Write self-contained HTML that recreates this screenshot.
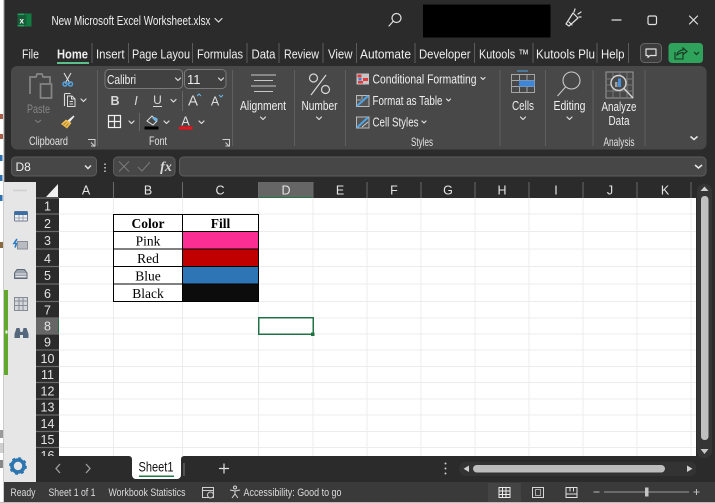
<!DOCTYPE html>
<html><head><meta charset="utf-8"><style>
html,body{margin:0;padding:0;background:#fff;width:715px;height:503px;overflow:hidden}
svg{display:block}
text{font-family:"Liberation Sans",sans-serif}
.w{fill:#efefef;font-size:13px}
.g{fill:#e2e2e2;font-size:12px}
.s{fill:#dadada;font-size:11px}
.h{fill:#e4e4e4;font-size:12.500px;text-anchor:middle}
.c{fill:#000;font-family:"Liberation Serif",serif;font-size:13.500px;text-anchor:middle}
.v{fill:none;stroke:#e0e0e0;stroke-width:1.200;stroke-linecap:round;stroke-linejoin:round}
</style></head><body>
<svg width="715" height="503" viewBox="0 0 715 503" xmlns="http://www.w3.org/2000/svg">
<rect width="715" height="503" fill="#fff"/>
<!-- background window peeking at the far left -->
<rect x="0" y="114" width="3" height="5" fill="#a8604a"/>
<rect x="0" y="134" width="3" height="5" fill="#a8604a"/>
<rect x="0" y="155" width="2.500" height="6" fill="#2f6fb5"/>
<rect x="0" y="175" width="2.500" height="6" fill="#2f6fb5"/>
<rect x="0" y="195" width="2.500" height="6" fill="#2f6fb5"/>
<rect x="0" y="242" width="3" height="6" fill="#8a6a40"/>
<rect x="0" y="430" width="3" height="8" fill="#9a9a9a"/>
<rect x="0" y="443" width="3.500" height="10" fill="#d0d0d0"/>
<rect x="0" y="460" width="3" height="8" fill="#888"/>
<rect x="4" y="0" width="711" height="502" fill="#2b2b2b"/>
<rect x="3.500" y="0" width="1" height="503" fill="#999"/>
<rect x="0" y="502" width="715" height="1" fill="#bbb"/>

<!-- title bar -->
<rect x="17.500" y="13.500" width="14" height="13" rx="1" fill="#21a366"/>
<rect x="24" y="13.500" width="7.500" height="13" fill="#107c41"/>
<rect x="17.500" y="15" width="9" height="10" fill="#185c37"/>
<text x="19.500" y="23.500" style="font-size:8px;font-weight:bold" fill="#fff">x</text>
<text x="51.500" y="25" class="w" style="font-size:12.500px" textLength="159" lengthAdjust="spacingAndGlyphs">New Microsoft Excel Worksheet.xlsx</text>
<path d="M215 18.500l3.500 3.500 3.500-3.500" class="v"/>
<circle cx="396.500" cy="18" r="4.500" class="v"/><path d="M393 21.500l-4 4.500" class="v"/>
<rect x="423" y="4.500" width="127.500" height="33" fill="#000"/>
<path d="M566 24l7-11 5 5-9 8zM569 22l3 3M574 12l1-3M578 14l3-2M579 17l2 0" class="v"/>
<path d="M612 20h9" class="v"/>
<rect x="648" y="16" width="8.500" height="8.500" rx="1.500" class="v"/>
<path d="M689.500 16l8 8M697.500 16l-8 8" class="v"/>

<!-- tabs -->
<text x="22" y="58.500" class="w" textLength="17" lengthAdjust="spacingAndGlyphs">File</text>
<text x="57" y="58.500" class="w" style="font-weight:bold" textLength="31" lengthAdjust="spacingAndGlyphs">Home</text>
<rect x="57" y="62" width="32" height="2" fill="#5fbf8a"/>
<text x="96" y="58.500" class="w" textLength="28.500" lengthAdjust="spacingAndGlyphs">Insert</text>
<text x="132" y="58.500" class="w" textLength="58" lengthAdjust="spacingAndGlyphs">Page Layou</text>
<text x="197" y="58.500" class="w" textLength="46" lengthAdjust="spacingAndGlyphs">Formulas</text>
<text x="251.500" y="58.500" class="w" textLength="24" lengthAdjust="spacingAndGlyphs">Data</text>
<text x="284" y="58.500" class="w" textLength="35" lengthAdjust="spacingAndGlyphs">Review</text>
<text x="328" y="58.500" class="w" textLength="24.500" lengthAdjust="spacingAndGlyphs">View</text>
<text x="360" y="58.500" class="w" textLength="51" lengthAdjust="spacingAndGlyphs">Automate</text>
<text x="419" y="58.500" class="w" textLength="51.500" lengthAdjust="spacingAndGlyphs">Developer</text>
<text x="479" y="58.500" class="w" textLength="50" lengthAdjust="spacingAndGlyphs">Kutools ™</text>
<text x="536" y="58.500" class="w" textLength="59" lengthAdjust="spacingAndGlyphs">Kutools Plu</text>
<text x="601" y="58.500" class="w" textLength="23.500" lengthAdjust="spacingAndGlyphs">Help</text>
<path d="M92 43v20M128.500 43v20M192.500 43v20M247 43v20M279 43v20M323 43v20M356.500 43v20M415 43v20M474.500 43v20M533 43v20M597 43v20M628.500 43v20" stroke="#5c5c5c" fill="none"/>
<rect x="640.500" y="43.500" width="21" height="19" rx="4" fill="#3d3d3d" stroke="#666"/>
<path d="M646 49h10v6.500h-6l-2 2v-2h-2z" class="v"/>
<rect x="668.500" y="43" width="34.500" height="20" rx="3.500" fill="#2fa35c"/>
<path d="M675 52v7h8v-4M677 55c0-3 3-5 6-5v-2l4 3.500-4 3v-2c-2 0-4 1-6 2.500z" fill="none" stroke="#16331f" stroke-width="1.100"/>
<path d="M694 52l2.500 2.500 2.500-2.500" fill="none" stroke="#16331f" stroke-width="1.200"/>

<!-- ribbon -->
<rect x="11" y="66" width="695.500" height="83.500" rx="6" fill="#484848"/>
<g stroke="#5f5f5f" fill="none">
<path d="M97.500 70v76M232.500 70v76M294.500 70v76M345.500 70v76M500 70v76M545.500 70v76M593 70v76M645 70v76"/>
</g>
<!-- clipboard -->
<path d="M30 94V77h6l1-3h5l1 3h7v6" fill="none" stroke="#868686" stroke-width="1.700"/>
<rect x="40.500" y="84" width="11" height="14" fill="none" stroke="#868686" stroke-width="1.700"/>
<text x="38.500" y="113" text-anchor="middle" style="font-size:12px" fill="#868686" textLength="23" lengthAdjust="spacingAndGlyphs">Paste</text>
<path d="M35 120l3 2.500 3-2.500" fill="none" stroke="#808080"/>
<path d="M64 73l6 10.500M71 73l-6 10.500" stroke="#e4e4e4" fill="none"/>
<circle cx="65" cy="84" r="2" fill="none" stroke="#4fa3e0" stroke-width="1.500"/><circle cx="70.500" cy="84" r="2" fill="none" stroke="#4fa3e0" stroke-width="1.500"/>
<path d="M64.500 106V94.500a1 1 0 0 1 1-1h5" fill="none" stroke="#dcdcdc" stroke-width="1.100"/>
<path d="M67.500 106.500h7.500v-7.500l-3-3h-4.500zM71.500 96v3h3.500M69.500 101.500h3.500M69.500 104h3.500" fill="none" stroke="#dcdcdc" stroke-width="1"/>
<path d="M81 99l2.500 2.500 2.500-2.500" class="v"/>
<path d="M73.500 115.500l-6 5 2 2 5-6z" fill="#ededed"/>
<path d="M66 119.500l-5 4.500 6 4.500 4.500-5.500z" fill="#f0bd4e"/>
<path d="M63.500 125l3-3M66 126.500l2.500-3" stroke="#9a7a28" stroke-width=".8"/>
<text x="48.500" y="145" text-anchor="middle" class="g" textLength="39" lengthAdjust="spacingAndGlyphs">Clipboard</text>
<path d="M88 139.500h7v7M95 146.500l-4-4M91 146h4v-4" fill="none" stroke="#cfcfcf"/>
<!-- font -->
<rect x="105" y="69.500" width="77.500" height="19" rx="4" fill="#414141" stroke="#7a7a7a"/>
<text x="107" y="84" class="w" textLength="29" lengthAdjust="spacingAndGlyphs">Calibri</text>
<path d="M175.500 78l2.500 2.500 2.500-2.500" class="v"/>
<rect x="184.500" y="69.500" width="41.500" height="19" rx="4" fill="#414141" stroke="#7a7a7a"/>
<text x="187" y="84" class="w">11</text>
<path d="M218.500 78l2.500 2.500 2.500-2.500" class="v"/>
<text x="115" y="105" text-anchor="middle" style="font-size:12.500px;font-weight:bold" fill="#d8d8d8">B</text>
<text x="136" y="105" text-anchor="middle" style="font-size:12.500px;font-style:italic" fill="#d8d8d8">I</text>
<text x="157.500" y="104" text-anchor="middle" style="font-size:12px" fill="#d8d8d8">U</text>
<path d="M153 106.500h9" stroke="#d8d8d8"/>
<path d="M171 99.500l2.500 2.500 2.500-2.500" class="v"/>
<path d="M182.500 91v20" stroke="#666"/>
<text x="193" y="105.500" text-anchor="middle" style="font-size:15px" fill="#dcdcdc">A</text>
<path d="M197 96l2-2 2 2" fill="none" stroke="#6cb6e8"/>
<text x="215" y="105.500" text-anchor="middle" style="font-size:12.500px" fill="#dcdcdc">A</text>
<path d="M219 95l2 2 2-2" fill="none" stroke="#6cb6e8"/>
<rect x="108.500" y="115.500" width="12" height="12" fill="none" stroke="#f0f0f0" stroke-width="1.200"/>
<path d="M114.500 115.500v12M108.500 121.500h12" stroke="#f0f0f0" stroke-width="1.200"/>
<path d="M129 121l2.500 2.500 2.500-2.500" class="v"/>
<path d="M139.500 113v18" stroke="#666"/>
<path d="M147 121l5-5 5 5-4 4z" fill="none" stroke="#e0e0e0"/>
<path d="M152 118l4 4 2-3-3-2z" fill="#6cb6e8"/>
<rect x="144.500" y="126.500" width="14" height="3" fill="#000"/>
<path d="M164 121l2.500 2.500 2.500-2.500" class="v"/>
<text x="185.500" y="125.500" text-anchor="middle" style="font-size:12.500px" fill="#e0e0e0">A</text>
<rect x="179" y="126.500" width="13.500" height="3" fill="#f0101c"/>
<path d="M199 121l2.500 2.500 2.500-2.500" class="v"/>
<text x="158" y="145" text-anchor="middle" class="g" textLength="18" lengthAdjust="spacingAndGlyphs">Font</text>
<path d="M222.500 139.500h7v7M229.500 146.500l-4-4M225.500 146h4v-4" fill="none" stroke="#cfcfcf"/>
<!-- align -->
<path d="M251 75h25M254 80.500h19M251 86h25M254 91.500h19" stroke="#c8c8c8" stroke-width="1.100" fill="none"/>
<text x="263" y="110" text-anchor="middle" class="w" style="font-size:12.500px" textLength="46" lengthAdjust="spacingAndGlyphs">Alignment</text>
<path d="M260.500 117l2.500 2.500 2.500-2.500" class="v"/>
<!-- number -->
<path d="M326 75l-15 20" stroke="#d8d8d8" stroke-width="1.200" fill="none"/>
<circle cx="313.500" cy="78" r="4" fill="none" stroke="#d8d8d8" stroke-width="1.200"/><circle cx="325.500" cy="89.500" r="4" fill="none" stroke="#d8d8d8" stroke-width="1.200"/>
<text x="319.500" y="110" text-anchor="middle" class="w" style="font-size:12.500px" textLength="36" lengthAdjust="spacingAndGlyphs">Number</text>
<path d="M316.500 117l2.500 2.500 2.500-2.500" class="v"/>
<!-- styles -->
<rect x="356.500" y="73.500" width="12.500" height="11" fill="#c5c5c5"/>
<rect x="357.500" y="74.500" width="4" height="3" fill="#e23b3b"/><rect x="363" y="78" width="5" height="3" fill="#e23b3b"/><rect x="358" y="81" width="5" height="2.500" fill="#e23b3b"/><rect x="358.500" y="78" width="3" height="2.500" fill="#3d7fd6"/>
<text x="372.500" y="83.500" class="w" style="font-size:12.500px" textLength="104" lengthAdjust="spacingAndGlyphs">Conditional Formatting</text>
<path d="M481 77.500l2 2 2-2" class="v"/>
<rect x="356.500" y="95.500" width="12.500" height="11" fill="#555" stroke="#bbb"/><path d="M357 106l11-10" stroke="#4ea6e8" stroke-width="2"/><path d="M357 100h4M362 95.500v4" stroke="#aaa"/>
<text x="372.500" y="105" class="w" style="font-size:12.500px" textLength="70" lengthAdjust="spacingAndGlyphs">Format as Table</text>
<path d="M446.500 99l2 2 2-2" class="v"/>
<rect x="356.500" y="117" width="12.500" height="11" fill="#555" stroke="#bbb"/><path d="M357 127.500l11-10" stroke="#4ea6e8" stroke-width="2"/><path d="M362 127l6-5" stroke="#ccc"/>
<text x="372.500" y="126.500" class="w" style="font-size:12.500px" textLength="46" lengthAdjust="spacingAndGlyphs">Cell Styles</text>
<path d="M422 121l2 2 2-2" class="v"/>
<text x="422" y="146" text-anchor="middle" class="g" textLength="22" lengthAdjust="spacingAndGlyphs">Styles</text>
<!-- cells -->
<path d="M517 71h11" stroke="#4ea6e8" fill="none"/>
<rect x="511.500" y="74.500" width="23" height="18" fill="none" stroke="#a5a5a5"/>
<path d="M511.500 80.500h23M511.500 86.500h23M519.500 74.500v18M527 74.500v18" stroke="#a5a5a5" fill="none"/>
<rect x="519" y="80.500" width="15.500" height="6" fill="#3f87d6"/>
<text x="523" y="110" text-anchor="middle" class="w" style="font-size:12.500px" textLength="22" lengthAdjust="spacingAndGlyphs">Cells</text>
<path d="M520.500 117l2.500 2.500 2.500-2.500" class="v"/>
<!-- editing -->
<circle cx="571.500" cy="80.500" r="8.500" fill="none" stroke="#c8c8c8" stroke-width="1.100"/>
<path d="M565.500 87l-8 9" stroke="#c8c8c8" stroke-width="1.100"/>
<text x="569.500" y="110" text-anchor="middle" class="w" style="font-size:12.500px" textLength="32" lengthAdjust="spacingAndGlyphs">Editing</text>
<path d="M567 117l2.500 2.500 2.500-2.500" class="v"/>
<!-- analyze -->
<rect x="606" y="72" width="27" height="26" fill="none" stroke="#9a9a9a"/>
<path d="M606 79h27M606 85h27M606 91h27M613 72v26M620 72v26M627 72v26" stroke="#777" fill="none"/>
<circle cx="618.500" cy="83" r="7.500" fill="#4a4a4a" stroke="#d5d5d5" stroke-width="1.400"/>
<rect x="615" y="82" width="2.500" height="5" fill="#a0a0a0"/><rect x="618" y="78.500" width="3" height="8.500" fill="#4a90d9"/>
<path d="M624 88.500l9 9.500" stroke="#d5d5d5" stroke-width="1.400"/>
<text x="619" y="111" text-anchor="middle" class="w" style="font-size:12.500px" textLength="35" lengthAdjust="spacingAndGlyphs">Analyze</text>
<text x="619" y="125" text-anchor="middle" class="w" style="font-size:12.500px" textLength="21" lengthAdjust="spacingAndGlyphs">Data</text>
<text x="619" y="146" text-anchor="middle" class="g" textLength="31" lengthAdjust="spacingAndGlyphs">Analysis</text>
<path d="M690.500 136.500l3.500 3 3.500-3" fill="none" stroke="#e8e8e8" stroke-width="1.500"/>

<!-- formula row -->
<rect x="11.500" y="157" width="85" height="19" rx="4" fill="#474747" stroke="#5c5c5c"/>
<text x="15.500" y="171" class="w" style="font-size:12px">D8</text>
<path d="M85 165.500l3 3 3-3" fill="none" stroke="#e8e8e8" stroke-width="1.400"/>
<path d="M105 163.500v1.500M105 167v1.500M105 170.500v1.500" stroke="#ccc" stroke-width="1.500"/>
<rect x="113.500" y="157" width="61.500" height="19" rx="4" fill="#474747" stroke="#5c5c5c"/>
<path d="M119 161.500l10 10M129 161.500l-10 10" stroke="#7a7a7a" fill="none"/>
<path d="M138 167l4 4 8-9" stroke="#7a7a7a" fill="none"/>
<text x="166" y="171" text-anchor="middle" style="font-family:'Liberation Serif',serif;font-style:italic;font-size:14px;font-weight:bold" fill="#d8d8d8">fx</text>
<rect x="179.500" y="157" width="526.500" height="19" rx="4" fill="#474747" stroke="#5c5c5c"/>
<path d="M695 165l3.500 3 3.500-3" fill="none" stroke="#e8e8e8" stroke-width="1.500"/>

<!-- sheet -->
<rect x="59" y="198" width="637" height="258" fill="#fff"/>
<g stroke="#ececec" fill="none">
<path d="M59 214h637M59 231.500h637M59 249h637M59 266.500h637M59 284h637M59 301.500h637M59 318h637M59 334h637M59 350h637M59 366.500h637M59 382.500h637M59 399h637M59 415h637M59 431.500h637M59 447.500h637"/>
<path d="M113.500 198v258M182.500 198v258M258.500 198v258M313 198v258M367 198v258M421 198v258M475 198v258M529 198v258M583 198v258M637 198v258M691 198v258"/>
</g>
<!-- col headers -->
<rect x="36" y="182" width="660" height="16" fill="#2b2b2b"/>
<rect x="258.500" y="182" width="54.500" height="16" fill="#666"/>
<rect x="258.500" y="197" width="54.500" height="1" fill="#217346"/>
<path d="M113.500 182v16M182.500 182v16M258.500 182v16M313 182v16M367 182v16M421 182v16M475 182v16M529 182v16M583 182v16M637 182v16M691 182v16" stroke="#6a6a6a" fill="none"/>
<text x="86" y="194.500" class="h">A</text><text x="148" y="194.500" class="h">B</text><text x="220" y="194.500" class="h">C</text><text x="286" y="194.500" class="h">D</text><text x="340" y="194.500" class="h">E</text><text x="394" y="194.500" class="h">F</text><text x="448" y="194.500" class="h">G</text><text x="502" y="194.500" class="h">H</text><text x="556" y="194.500" class="h">I</text><text x="610" y="194.500" class="h">J</text><text x="665" y="194.500" class="h">K</text>
<!-- row headers -->
<rect x="36" y="182" width="23" height="274" fill="#2b2b2b"/>
<path d="M58 184v13H46z" fill="#f0f0f0"/>
<rect x="36" y="318" width="23" height="16" fill="#666"/>
<rect x="58" y="318" width="1" height="16" fill="#217346"/>
<path d="M36 198h23M36 214h23M36 231.500h23M36 249h23M36 266.500h23M36 284h23M36 301.500h23M36 318h23M36 334h23M36 350h23M36 366.500h23M36 382.500h23M36 399h23M36 415h23M36 431.500h23M36 447.500h23" stroke="#6a6a6a" stroke-width="1.300" fill="none"/>
<text x="47.500" y="210.500" class="h">1</text><text x="47.500" y="228" class="h">2</text><text x="47.500" y="245" class="h">3</text><text x="47.500" y="263" class="h">4</text><text x="47.500" y="280" class="h">5</text><text x="47.500" y="298" class="h">6</text><text x="47.500" y="314.500" class="h">7</text><text x="47.500" y="330.500" class="h">8</text><text x="47.500" y="346.500" class="h">9</text><text x="47.500" y="363" class="h">10</text><text x="47.500" y="379" class="h">11</text><text x="47.500" y="395.500" class="h">12</text><text x="47.500" y="411.500" class="h">13</text><text x="47.500" y="428" class="h">14</text><text x="47.500" y="444" class="h">15</text><text x="47.500" y="460" class="h">16</text>
<!-- table -->
<rect x="182.500" y="231.500" width="76" height="17.500" fill="#fb2f93"/>
<rect x="182.500" y="249" width="76" height="17.500" fill="#c00000"/>
<rect x="182.500" y="266.500" width="76" height="17.500" fill="#2e75b6"/>
<rect x="182.500" y="284" width="76" height="17.500" fill="#0c0c0c"/>
<g stroke="#000" fill="none"><rect x="113.500" y="214.500" width="145" height="87"/><path d="M182.500 214.500v87M113.500 231.500h145M113.500 249h145M113.500 266.500h145M113.500 284h145"/></g>
<text x="148" y="228" class="c" style="font-weight:bold">Color</text>
<text x="220.500" y="228" class="c" style="font-weight:bold">Fill</text>
<text x="148" y="245.500" class="c">Pink</text>
<text x="148" y="263" class="c">Red</text>
<text x="148" y="280.500" class="c">Blue</text>
<text x="148" y="298" class="c">Black</text>
<!-- selection -->
<rect x="258.750" y="317.750" width="54.500" height="16.500" fill="none" stroke="#217346" stroke-width="1.500"/>
<rect x="311" y="332.500" width="3.500" height="3.500" fill="#217346"/>

<!-- task pane -->
<rect x="4" y="182" width="32" height="300" fill="#e6e6e6"/>
<rect x="4" y="290" width="4" height="85" fill="#62a82e"/>
<rect x="5.500" y="330.500" width="2" height="3" fill="#fff"/>
<path d="M13 190.500h14" stroke="#cfcfcf" stroke-width="1.500"/>
<!-- icon: table with blue header -->
<rect x="14.500" y="211.500" width="13" height="9.500" rx="1" fill="#f2f2f2" stroke="#6b7a90"/>
<rect x="14.500" y="211.500" width="13" height="3.500" fill="#3a6ea5"/>
<path d="M19 215v6M23 215v6M14.500 218h13" stroke="#8a96a6" stroke-width=".8"/>
<!-- icon: fx -->
<rect x="17.500" y="241.500" width="10" height="7.500" fill="#b8bcc2" stroke="#8a8f96"/>
<path d="M17 239l-3 4.500h2.500l-1.500 4" stroke="#2c7cc4" stroke-width="1.600" fill="none"/>
<!-- icon: printer-like stack -->
<path d="M17 269.500h7.500l2.500 3.500v5.500H14.500V273z" fill="#9aa3ae" stroke="#5f6b78"/>
<path d="M15.500 274h11M15.500 276.500h11" stroke="#e6e6e6" stroke-width=".9"/>
<!-- icon: grid -->
<rect x="14.500" y="297.500" width="13" height="13" fill="#d5d7da" stroke="#848c96"/>
<path d="M19 297.500v13M23 297.500v13M14.500 301h13M14.500 305.500h13" stroke="#848c96" fill="none"/>
<!-- icon: binoculars -->
<path d="M14.500 338v-4l2-6h3l1 4h2l1-4h3l2 6v4h-5.500v-3h-3v3z" fill="#55677c"/>
<circle cx="18" cy="466" r="6" fill="none" stroke="#2b76b0" stroke-width="3.600"/>
<circle cx="18" cy="466" r="8" fill="none" stroke="#2b76b0" stroke-width="1.800" stroke-dasharray="3 3.280"/>
<rect x="36" y="456" width="660" height="26" fill="#2b2b2b"/>

<!-- tab bar -->
<path d="M60 464l-4 4.500 4 4.500M86 464l4 4.500-4 4.500" fill="none" stroke="#a0a0a0" stroke-width="1.300"/>
<path d="M128 456h57c-3 0-4 1-4 4v15a4 4 0 0 1-4 4h-41a4 4 0 0 1-4-4v-15c0-3-1-4-4-4z" fill="#fff"/>
<text x="138.500" y="471.500" style="font-size:14px" fill="#111" textLength="35" lengthAdjust="spacingAndGlyphs">Sheet1</text>
<rect x="139" y="475.500" width="35" height="1.500" fill="#1d7a45"/>
<path d="M184 463v13" stroke="#777"/>
<path d="M219 468.500h10M224 463.500v10" stroke="#e0e0e0" stroke-width="1.200"/>
<circle cx="445.500" cy="463.500" r="1" fill="#ccc"/><circle cx="445.500" cy="468.500" r="1" fill="#ccc"/><circle cx="445.500" cy="473.500" r="1" fill="#ccc"/>
<rect x="459" y="462" width="238" height="14" rx="7" fill="#333"/>
<path d="M469 465.500v6.500l-5.500-3.250zM687 465.500v6.500l5.500-3.250z" fill="#cfcfcf"/>
<rect x="473" y="465" width="192" height="7.500" rx="3.750" fill="#bdbdbd"/>

<!-- vertical scroll -->
<rect x="696" y="182" width="19" height="300" fill="#2b2b2b"/>
<rect x="697" y="184" width="15" height="274" rx="7" fill="#353535"/>
<path d="M700.500 191l4-4.500 4 4.500z" fill="#d0d0d0"/>
<rect x="701" y="196" width="7.500" height="244" rx="3.500" fill="#bfbfbf"/>
<path d="M700.500 449h8l-4 5z" fill="#c8c8c8"/>

<!-- status -->
<rect x="4" y="482" width="711" height="20" fill="#3a3a3a"/>
<text x="10.500" y="496" class="s" textLength="25" lengthAdjust="spacingAndGlyphs">Ready</text>
<text x="48.500" y="496" class="s" textLength="47" lengthAdjust="spacingAndGlyphs">Sheet 1 of 1</text>
<text x="108.500" y="496" class="s" textLength="77" lengthAdjust="spacingAndGlyphs">Workbook Statistics</text>
<rect x="202.500" y="487.500" width="11" height="10" fill="none" stroke="#d0d0d0"/><path d="M202.500 490.500h11" stroke="#d0d0d0"/><circle cx="210.500" cy="495" r="3" fill="#3a3a3a" stroke="#d0d0d0"/>
<circle cx="235" cy="487.500" r="1.500" fill="none" stroke="#d8d8d8"/>
<path d="M230 490l5 1 5-1M235 491v3l-3 4M235 494l3 4" fill="none" stroke="#d8d8d8"/>
<text x="243.500" y="496" class="s" textLength="98" lengthAdjust="spacingAndGlyphs">Accessibility: Good to go</text>
<rect x="488" y="483" width="33" height="19" fill="#444"/>
<rect x="499" y="487.500" width="11" height="10" fill="none" stroke="#ececec"/><path d="M499 491h11M499 494.500h11M502.500 487.500v10M506 487.500v10" stroke="#ececec" fill="none"/>
<rect x="532.500" y="487.500" width="11" height="10" fill="none" stroke="#d8d8d8"/><rect x="535.500" y="489.500" width="5" height="6" fill="none" stroke="#a8a8a8"/>
<rect x="566" y="487.500" width="11" height="10" fill="none" stroke="#e0e0e0"/><path d="M566 494h11M570 487.500v4M573.500 487.500v4" stroke="#e0e0e0" fill="none"/>
<path d="M593.500 492h6" stroke="#bbb"/>
<path d="M604 492h85" stroke="#999"/>
<rect x="645" y="487.500" width="3.500" height="9" fill="#c4c4c4"/>
<path d="M693.500 492h6M696.500 489v6" stroke="#bbb"/>
</svg>
</body></html>
